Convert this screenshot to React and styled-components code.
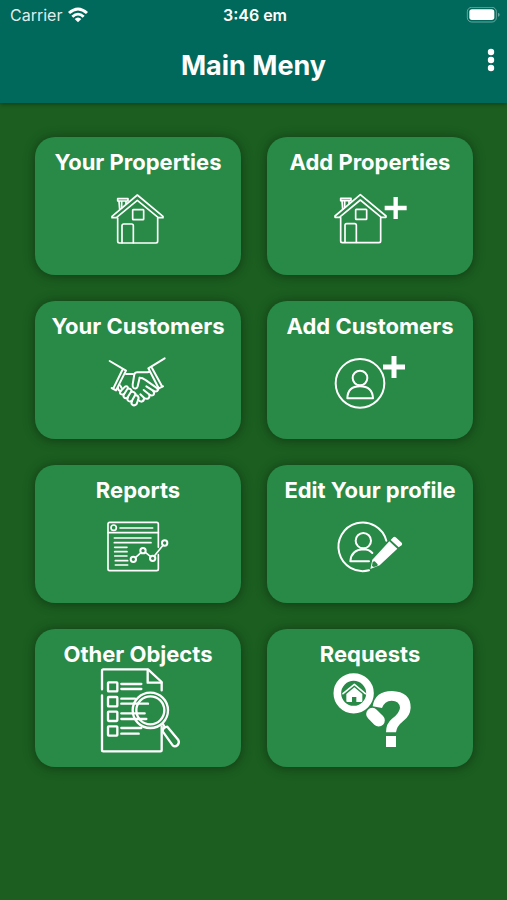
import React from 'react'
import styled, { createGlobalStyle } from 'styled-components'

function Wifi() {
    return (
        <svg width="20" height="16" viewBox="0 0 60 48" fill="#fff" aria-hidden="true">
            <path d="M0 15 Q30 -12 60 15 L54 21 Q30 0 6 21 Z" />
            <path d="M10 26 Q30 8 50 26 L44 32 Q30 19 16 32 Z" />
            <path d="M20 36 Q30 27 40 36 L30 46 Z" />
        </svg>
    )
}

function Battery() {
    return (
        <svg width="34" height="16" viewBox="0 0 102 48" aria-hidden="true">
            <rect x="4" y="1" width="87" height="44" rx="13" fill="none" stroke="#fff" strokeOpacity="0.4" strokeWidth="3" />
            <rect x="10" y="7" width="75" height="32" rx="8" fill="#fff" />
            <path d="M96 17 Q101 19 101 23 Q101 27 96 29 Z" fill="#fff" fillOpacity="0.4" />
        </svg>
    )
}

function House() {
    return (
        <g strokeWidth="5">
            <path d="M322 195 L246 259 V263 H259 L322 211 L385 263 H399 V259 Z" />
            <path d="M263 264 V334 Q263 339 268 339 H378 Q383 339 383 334 V264" />
            <path d="M276 338 V287 Q276 282 281 282 H305 Q310 282 310 287 V338" />
            <rect x="308" y="239" width="33" height="30" rx="2" />
            <path d="M263 206 H294 V213 H263 Z M267 214 L269 238 M275 214 V233 M288 214 V221" />
        </g>
    )
}

function PropertiesIcon() {
    return (
        <Icon viewBox="180 129 288 270">
            <House />
        </Icon>
    )
}

function AddPropertiesIcon() {
    return (
        <Icon viewBox="186 129 288 270">
            <g transform="translate(-21 -1)">
                <House />
            </g>
            <path d="M407 201 V267 M374 234 H440" strokeWidth="13" strokeLinecap="butt" />
        </Icon>
    )
}

function HandshakeIcon() {
    return (
        <Icon viewBox="-15 -24 288 270">
            <g strokeWidth="6">
                <path d="M44 48 L93 77 L63 136 L50 129" />
                <path d="M82 75 L55 130" />
                <path d="M209 40 L160 70 L191 130 L204 124" />
                <path d="M171 69 L201 124" />
                <path d="M93 87 H114 M75 121 L80 129" />
                <path d="M134 98 L128 124 Q124 134 116 129 Q112 126 113 118 L118 88 Q120 82 127 82 H157 L165 80" />
                <path d="M134 98 Q143 98 150 104 L184 128 Q191 133 187 138 Q182 142 174 137 L154 124" />
                <path d="M174 137 Q180 145 175 150 Q169 154 162 148 L146 135" />
                <path d="M163 149 Q165 157 159 161 Q153 163 147 158 L136 148" />
                <path d="M147 159 Q148 167 140 170 Q134 170 129 164" />
                <path d="M188 135 Q192 131 189 127" />
                <path d="M91 124 Q97 122 99 129 L89 145 Q83 151 77 147 Q73 143 77 138 Z" />
                <path d="M99 131 Q106 129 110 137 L98 157 Q91 162 87 157 Q83 153 88 146" />
                <path d="M109 141 Q117 138 122 147 L111 167 Q104 172 99 167 Q95 163 99 157" />
                <path d="M121 151 Q129 150 131 159 L125 177 Q118 184 112 179 Q107 175 111 169" />
                <path d="M77 138 Q68 137 69 128" />
            </g>
        </Icon>
    )
}

function AddCustomersIcon() {
    return (
        <Icon viewBox="-9 -24 288 270">
            <g strokeWidth="6">
                <circle cx="105" cy="115" r="73" />
                <circle cx="105" cy="99" r="22" />
                <path d="M67 160 Q68 124 105 124 Q142 124 144 160 Z" />
            </g>
            <path d="M207 33 V99 M174 66 H240" strokeWidth="15" strokeLinecap="butt" />
        </Icon>
    )
}

function ReportsIcon() {
    return (
        <Icon viewBox="-15 -27 288 270">
            <g strokeWidth="5">
                <path d="M190 112 V42 Q190 37 185 37 H44 Q39 37 39 42 V177 Q39 182 44 182 H185 Q190 182 190 177 V134" />
                <path d="M39 68 H190" />
                <circle cx="56" cy="53" r="8" />
                <path d="M75 54 H173 M58 84 H168 M58 98 H168 M59 112 H96 M59 125 H96 M59 138 H96 M61 152 H98 M61 165 H98" />
                <path d="M122 142 L138 128 M151 127 L167 140 M178 138 L204 106" />
            </g>
            <g strokeWidth="6">
                <circle cx="115" cy="148" r="8" />
                <circle cx="144" cy="122" r="8" />
                <circle cx="173" cy="145" r="8" />
                <circle cx="209" cy="99" r="8" />
            </g>
        </Icon>
    )
}

function EditProfileIcon() {
    return (
        <Icon viewBox="-9 -27 288 270">
            <g strokeWidth="6">
                <path d="M132 181 A73 73 0 1 1 184 92" />
                <circle cx="115" cy="92" r="23" />
                <path d="M132 154 H76 Q79 119 115 118 Q132 118 142 129" />
            </g>
            <g fill="#fff" stroke="none">
                <path d="M136 177 L142 149 L193 94 L217 116 L164 166 Z" />
                <path d="M197 90 L205 82 Q208 79 212 82 L230 98 Q233 102 230 106 L221 112 Z" />
            </g>
            <path d="M143 155 L149 154 L158 163 L157 168 L146 171 L141 168 Z" fill="#288a46" stroke="none" />
        </Icon>
    )
}

function ObjectsIcon() {
    return (
        <Icon viewBox="0 15 288 270">
            <g strokeWidth="7">
                <path d="M36 88 V32 Q36 28 40 28 H174 L215 66 V91" />
                <path d="M173 30 V68 H214" />
                <path d="M36 106 V270 Q36 274 40 274 H211 Q215 274 215 270 V199" />
                <rect x="54" y="67" width="28" height="27" rx="2" />
                <rect x="54" y="111" width="28" height="28" rx="2" />
                <rect x="54" y="155" width="28" height="28" rx="2" />
                <rect x="54" y="199" width="28" height="28" rx="2" />
                <path d="M94 72 H154 M94 87 H154 M94 116 H135 M94 131 H174 M94 160 H164 M94 177 H169 M94 204 H154 M94 221 H146" />
                <circle cx="181" cy="151" r="53" />
                <circle cx="181" cy="151" r="42" />
                <path d="M218 191 L224 201 M218 214 Q218 202 232 200 L265 240 Q269 247 263 255 Q255 262 248 256 Z" />
            </g>
        </Icon>
    )
}

function RequestsIcon() {
    return (
        <Icon viewBox="-9 15 288 270">
            <circle cx="86" cy="100" r="49" strokeWidth="23" />
            <g fill="#fff" stroke="none">
                <path d="M64 102 L88 82 L112 102 V123 Q112 126 109 126 H94 V111 H81 V126 H67 Q64 126 64 123 Z" />
                <path d="M143 139 Q150 93 201 93 Q257 95 257 143 Q256 167 234 184 Q215 199 213 217 H183 Q183 190 201 176 Q224 159 225 143 Q223 122 200 122 Q178 123 171 144 Z" />
                <rect x="183" y="228" width="30" height="33" />
            </g>
            <path d="M54 101 L88 73 L121 101" strokeWidth="5" />
            <path d="M142 162 L161 181" strokeWidth="43" stroke="#288a46" />
            <path d="M142 162 L161 181" strokeWidth="37" />
        </Icon>
    )
}

const items = [
    { title: 'Your Properties', icon: PropertiesIcon },
    { title: 'Add Properties', icon: AddPropertiesIcon },
    { title: 'Your Customers', icon: HandshakeIcon },
    { title: 'Add Customers', icon: AddCustomersIcon },
    { title: 'Reports', icon: ReportsIcon },
    { title: 'Edit Your profile', icon: EditProfileIcon },
    { title: 'Other Objects', icon: ObjectsIcon },
    { title: 'Requests', icon: RequestsIcon },
]

function App() {
    return (
        <>
        <GlobalStyle />
        <Page>
            <Header>
                <StatusBar>
                    <Carrier>Carrier <Wifi /></Carrier>
                    <Time>3:46 em</Time>
                    <Power><Battery /></Power>
                </StatusBar>
                <TitleBar>
                    <Title>Main Meny</Title>
                    <MoreButton aria-label="More options">
                        <svg width="8" height="24" viewBox="0 0 8 24" fill="#fff">
                            <circle cx="4" cy="4" r="3.2" />
                            <circle cx="4" cy="12" r="3.2" />
                            <circle cx="4" cy="20" r="3.2" />
                        </svg>
                    </MoreButton>
                </TitleBar>
            </Header>
            <Menu>
                {items.map(({ title, icon: ItemIcon }) => (
                    <Card key={title}>
                        <CardTitle>{title}</CardTitle>
                        <ItemIcon />
                    </Card>
                ))}
            </Menu>
        </Page>
        </>
    )
}

export default App

const GlobalStyle = createGlobalStyle`
    * {
        box-sizing: border-box;
    }

    body {
        margin: 0;
        background: #1b5e20;
        color: #fff;
        font-family: Inter, "Liberation Sans", sans-serif;
    }

    button {
        font-family: inherit;
        color: inherit;
        border: none;
        cursor: pointer;
    }
`

const Page = styled.div`
    min-height: 100vh;
    background: #1b5e20;
`

const Header = styled.header`
    background: #00695c;
    box-shadow: 0 1px 4px rgba(0, 0, 0, 0.4);
`

const StatusBar = styled.div`
    display: grid;
    grid-template-columns: 1fr auto 1fr;
    align-items: center;
    height: 30px;
    padding: 0 7px 0 10px;
    font-size: 16px;
`

const Carrier = styled.div`
    display: flex;
    align-items: center;
    gap: 6px;
    color: rgba(255, 255, 255, 0.9);
`

const Time = styled.div`
    font-weight: 600;
`

const Power = styled.div`
    display: flex;
    justify-content: flex-end;
`

const TitleBar = styled.div`
    display: grid;
    grid-template-columns: 1fr auto 1fr;
    height: 73px;
    padding: 18px 12px 0;
`

const Title = styled.h1`
    grid-column: 2;
    margin: 0;
    font-size: 27px;
    line-height: 36px;
    font-weight: 700;
`

const MoreButton = styled.button`
    justify-self: end;
    display: flex;
    height: 24px;
    padding: 0;
    background: none;
`

const Menu = styled.main`
    display: grid;
    grid-template-columns: 1fr 1fr;
    gap: 26px;
    padding: 34px 34px 34px 35px;
`

const Card = styled.button`
    display: flex;
    flex-direction: column;
    align-items: center;
    height: 138px;
    padding: 14px 0 0;
    border-radius: 20px;
    background: #288a46;
    box-shadow: 0 1px 12px rgba(0, 0, 0, 0.4);
`

const CardTitle = styled.span`
    font-size: 22px;
    line-height: 22px;
    height: 22px;
    font-weight: 700;
    white-space: nowrap;
`

const Icon = styled.svg.attrs({ 'aria-hidden': true })`
    width: 96px;
    height: 90px;
    flex: none;
    fill: none;
    stroke: #fff;
    stroke-linecap: round;
    stroke-linejoin: round;
`
